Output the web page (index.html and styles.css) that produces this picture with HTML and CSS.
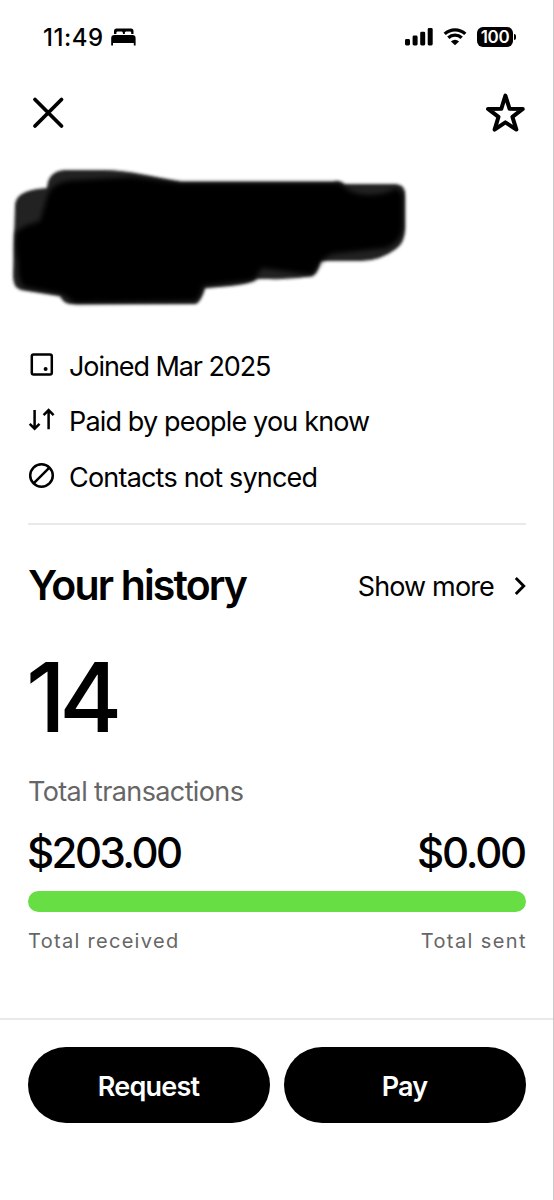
FILE: index.html
```html
<!DOCTYPE html>
<html lang="en">
<head>
<meta charset="utf-8">
<title>Profile</title>
<link rel="stylesheet" href="styles.css">
</head>
<body>
<div class="screen">
  <header class="status">
    <div class="status-left">
      <span class="time">11:49</span>
      <svg class="bed" width="26" height="18" viewBox="0 0 26 18">
        <path d="M3 6V3.200Q3 .5 5.700 .5H20Q22.500 .5 22.500 3.200V6H20.200V4.600Q20.200 3.500 19 3.500H15Q13.800 3.500 13.800 5V6H11.900V5Q11.900 3.500 10.700 3.500H6.700Q5.400 3.500 5.400 4.600V6Z"/>
        <path d="M.2 17.500V10.200Q.2 7 3.400 7H21.400Q24.600 7 24.600 10.200V17.500H22.800V15H2V17.500Z"/>
      </svg>
    </div>
    <div class="status-right">
      <svg width="28" height="19" viewBox="0 0 28 19">
        <rect x="0" y="12" width="5" height="6.500" rx="1.400"/>
        <rect x="7.600" y="8.500" width="5" height="10" rx="1.400"/>
        <rect x="15.200" y="4.700" width="5" height="13.800" rx="1.400"/>
        <rect x="22.700" y="1" width="5" height="17.500" rx="1.400"/>
      </svg>
      <svg class="wifi" width="24" height="19" viewBox="0 0 24 19">
        <path d="M1.700 6.900A15 15 0 0 1 22.300 6.900M5.300 10.700A9.800 9.800 0 0 1 18.700 10.700"/>
        <path class="solid" d="M7.900 14.400Q12 11 16.100 14.400L12 18.300Z"/>
      </svg>
      <div class="battery-wrap"><span class="battery">100</span><span class="battery-tip"></span></div>
    </div>
  </header>

  <nav class="nav">
    <svg width="30" height="30" viewBox="0 0 30 30"><path class="close" d="M2 1.500L28.500 28M28.500 1.500L2 28"/></svg>
    <svg class="star-icon" width="40" height="40" viewBox="0 0 40 40"><path class="star" d="M20.400 2.600L24.600 15.800L37.800 15.900L27.400 23.800L31.400 36.600L20.400 29.400L9.600 36.600L13.500 23.800L3 15.900L16.300 15.800Z"/></svg>
  </nav>

  <section class="identity">
    <svg width="430" height="170" viewBox="0 150 430 170">
      <defs>
        <filter id="soft" x="-5%" y="-5%" width="110%" height="110%"><feGaussianBlur stdDeviation="1.700"/></filter>
        <filter id="softer" x="-5%" y="-5%" width="110%" height="110%"><feGaussianBlur stdDeviation="2.500"/></filter>
      </defs>
      <path class="edge" filter="url(#soft)" d="M47 188Q48 171 65 170H102C132 170 151 177 181 182H333Q340 180 344 184H394Q405 184 405 194V228Q405 243 396 249Q380 261 361 261H320Q318 274 312 276Q291 280 269 279H257Q250 284 230 286L205 288Q201 301 196 304H70Q63 303 60 296L21 290Q13 288 13 276L15 205Q16 192 37 189Z"/>
      <path class="ink" filter="url(#softer)" d="M48 194Q54 180 80 180L132 177L181 183H340Q350 195 370 195Q388 194 396 188L403 194V228Q400 243 386 248L340 253Q328 253 322 261L312 275L262 268L254 280L203 286Q200 300 194 301L75 303L62 294L24 287Q17 280 18 262Q14 250 16 232L25 226L40 221Z"/>
    </svg>
  </section>

  <ul class="facts">
    <li><svg width="26" height="26" viewBox="0 0 26 26"><rect class="line" x="3.800" y="2.500" width="20" height="20" rx="1.800"/><circle cx="17.600" cy="17" r="2"/></svg><span class="f1">Joined Mar 2025</span></li>
    <li><svg width="26" height="26" viewBox="0 0 26 26"><path class="line" d="M6.600 3V21M1.700 16.800L6.600 21.700L11.500 16.800M20.600 22.300V4M15.600 8.100L20.600 3.100L25.600 8.100"/></svg><span class="f2">Paid by people you know</span></li>
    <li><svg width="26" height="26" viewBox="0 0 26 26"><circle class="line" cx="13.500" cy="12.500" r="11.300"/><path class="line" d="M5.600 20.400L21.400 4.600"/></svg><span class="f3">Contacts not synced</span></li>
  </ul>

  <main class="history">
    <div class="history-head">
      <h2>Your history</h2>
      <a class="more"><span>Show more</span><svg width="12" height="20" viewBox="0 0 12 20"><path d="M1.800 2L9.700 10L1.800 18"/></svg></a>
    </div>
    <div class="count">14</div>
    <div class="caption">Total transactions</div>
    <div class="amounts"><span class="received">$203.00</span><span class="sent">$0.00</span></div>
    <div class="bar"></div>
    <div class="labels"><span>Total received</span><span class="sent-label">Total sent</span></div>
  </main>

  <footer class="actions">
    <button class="request">Request</button>
    <button class="pay">Pay</button>
  </footer>
</div>
</body>
</html>
```
FILE: styles.css
```css
* { box-sizing: border-box; }
body { margin: 0; background: #fff; color: #000; font-family: Inter, "Liberation Sans", sans-serif; }
svg { display: block; flex: none; overflow: visible; }
.screen { width: 554px; height: 1200px; display: flex; flex-direction: column; border-right: 1px solid #c9c9c9; overflow: hidden; }
.status { height: 74px; flex: none; display: flex; justify-content: space-between; align-items: center; padding: 0 37px 0 43px; }
.status-left, .status-right { display: flex; align-items: center; }
.time { font-size: 24px; font-weight: 500; line-height: 28px; width: 68px; padding-top: 1px; white-space: nowrap; letter-spacing: 0.500px; }
.status-right { gap: 10px; }
.status-right svg { margin-top: -1px; }
.wifi path { fill: none; stroke: #000; stroke-width: 3.300; }
.wifi .solid { fill: #000; stroke: none; }
.battery-wrap { display: flex; align-items: center; gap: 1px; }
.battery { width: 36px; height: 20px; border-radius: 6px; background: #000; color: #fff; font-size: 17px; font-weight: 600; line-height: 20px; text-align: center; letter-spacing: -0.300px; }
.battery-tip { width: 2px; height: 6px; border-radius: 0 3px 3px 0; background: #000; }
.nav { height: 76px; flex: none; display: flex; justify-content: space-between; align-items: center; padding: 1px 28px 0 33px; }
.close { stroke: #000; stroke-width: 3.800; stroke-linecap: round; }
.star { fill: none; stroke: #000; stroke-width: 4; stroke-linejoin: round; }
.identity { height: 189px; flex: none; }
.edge { fill: #202020; }
.ink { fill: #000; }
.facts { list-style: none; margin: 0 27px 0 28px; padding: 0; height: 186px; flex: none; border-bottom: 2px solid #e9e9e9; }
.facts li { height: 55.500px; display: flex; align-items: center; gap: 15px; font-size: 27px; line-height: 56px; white-space: nowrap; }
.facts svg { position: relative; top: -2px; left: -0.500px; }
.line { fill: none; stroke: #000; stroke-width: 2.500; }
.f1 { letter-spacing: -1.080px; }
.f2 { letter-spacing: -0.840px; }
.f3 { letter-spacing: -0.800px; }
.history { height: 493px; flex: none; padding: 30px 27px 0 28px; }
.history-head { height: 60px; display: flex; align-items: center; justify-content: space-between; }
h2 { margin: 0; font-size: 41px; font-weight: 600; line-height: 60px; letter-spacing: -1.850px; white-space: nowrap; }
.more { display: flex; align-items: center; gap: 20px; font-size: 27px; line-height: 34px; letter-spacing: -0.850px; padding-top: 4px; }
.more svg { position: relative; top: -1px; }
.more path { fill: none; stroke: #000; stroke-width: 2.900; }
.count { height: 165px; font-size: 96px; line-height: 165px; letter-spacing: -6.500px; font-weight: 500; margin-left: -2px; }
.caption { height: 24px; font-size: 27px; line-height: 24px; color: #666; letter-spacing: -0.620px; }
.amounts { height: 87px; display: flex; justify-content: space-between; font-size: 42px; font-weight: 500; line-height: 97px; }
.received { letter-spacing: -2.550px; margin-left: -1px; }
.sent { letter-spacing: -2.200px; margin-right: 1px; }
.bar { height: 21px; border-radius: 11px; background: #67de44; }
.labels { display: flex; justify-content: space-between; font-size: 20px; line-height: 59px; color: #666; letter-spacing: 1.300px; }
.sent-label { letter-spacing: 1.400px; margin-right: -1px; }
.actions { flex: 1; border-top: 2px solid #e9e9e9; display: grid; grid-template-columns: 1fr 1fr; gap: 14px; padding: 27px 27px 0 28px; align-items: start; }
.actions button { height: 76px; border: 0; border-radius: 38px; background: #000; color: #fff; font: 600 27px/76px Inter, sans-serif; letter-spacing: -0.800px; padding: 2px 1px 0 0; }
```
